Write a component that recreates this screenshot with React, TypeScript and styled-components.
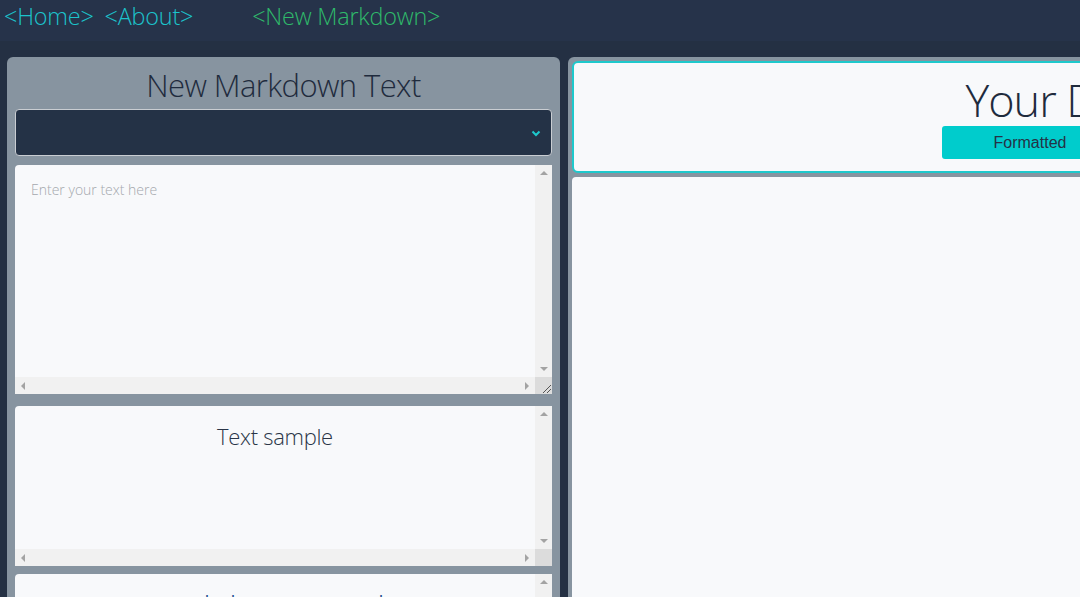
import React from "react";
import styled, { createGlobalStyle } from "styled-components";

const Global = createGlobalStyle`
  html, body {
    margin: 0;
    padding: 0;
    background: #243043;
    overflow: hidden;
    font-family: "Open Sans", "Noto Sans", sans-serif;
  }
  * { box-sizing: border-box; }
`;

const Page = styled.div`
  width: 1800px;
  min-height: 597px;
  background: #243043;
`;

const NavBar = styled.nav`
  height: 41px;
  background: #26334a;
  display: flex;
  align-items: flex-start;
  padding: 1px 0 0 4px;
  gap: 11px;
`;

const NavLink = styled.a<{ $green?: boolean; $offset?: number }>`
  font-family: "Open Sans", sans-serif;
  font-weight: 300;
  font-size: 23.4px;
  line-height: 30px;
  color: ${(p) => (p.$green ? "#2fba6a" : "#1cc3cc")};
  text-decoration: none;
  margin-left: ${(p) => p.$offset ?? 0}px;
  letter-spacing: -0.2px;
`;

const Main = styled.main`
  display: flex;
  gap: 8px;
  padding: 16px 0 0 7px;
`;

const LeftPanel = styled.section`
  width: 553px;
  flex-shrink: 0;
  background: #8794a0;
  border-radius: 6px 6px 0 0;
  padding: 8px 8px 0;
  display: flex;
  flex-direction: column;
  height: 560px;
  & > * {
    flex-shrink: 0;
  }
`;

const PanelTitle = styled.h1`
  margin: 0;
  font-family: "Open Sans", sans-serif;
  font-weight: 300;
  font-size: 31px;
  line-height: 40px;
  color: #1f2b3d;
  text-align: center;
  letter-spacing: -0.6px;
  height: 44px;
`;

const SelectWrap = styled.div`
  position: relative;
  height: 47px;
  margin-bottom: 9px;
`;

const Select = styled.select`
  appearance: none;
  display: block;
  width: 100%;
  height: 47px;
  background: #243246;
  border: 1px solid #c9cdd2;
  border-radius: 4px;
  color: #e8eef2;
  outline: none;
`;

const Chevron = styled.svg`
  position: absolute;
  right: 11px;
  top: 21px;
  width: 10px;
  height: 7px;
  pointer-events: none;
`;

/* Scroll frame: content + classic scrollbars laid out in a grid */
const Frame = styled.div<{ $h: number; $gap: number }>`
  height: ${(p) => p.$h}px;
  display: grid;
  grid-template-columns: 1fr 17px;
  grid-template-rows: 1fr 17px;
  background: #f8f9fb;
  border-radius: 4px 0 0 0;
  overflow: hidden;
  margin-bottom: ${(p) => p.$gap}px;
`;

const VBar = styled.div`
  background: #f1f1f1;
  display: flex;
  flex-direction: column;
  justify-content: space-between;
  align-items: center;
  padding: 6px 0;
`;

const HBar = styled.div`
  background: #f1f1f1;
  display: flex;
  justify-content: space-between;
  align-items: center;
  padding: 0 6px;
`;

const Corner = styled.div`
  background: #dcdcdc;
  display: flex;
  align-items: flex-end;
  justify-content: flex-end;
`;

const Arrow = styled.span<{ $dir: "up" | "down" | "left" | "right" }>`
  width: 0;
  height: 0;
  border-style: solid;
  ${(p) =>
    p.$dir === "up"
      ? "border-width: 0 4px 4px 4px; border-color: transparent transparent #a3a3a3 transparent;"
      : p.$dir === "down"
      ? "border-width: 4px 4px 0 4px; border-color: #a3a3a3 transparent transparent transparent;"
      : p.$dir === "left"
      ? "border-width: 4px 4px 4px 0; border-color: transparent #a3a3a3 transparent transparent;"
      : "border-width: 4px 0 4px 4px; border-color: transparent transparent transparent #a3a3a3;"}
`;

const TextArea = styled.textarea`
  display: block;
  width: 100%;
  height: 100%;
  resize: none;
  overflow: hidden;
  border: none;
  background: transparent;
  padding: 15px 16px;
  font-family: "Open Sans", sans-serif;
  font-weight: 300;
  font-size: 14px;
  color: #333;
  outline: none;
  &::placeholder {
    color: #a4a8ad;
  }
`;

const BoxContent = styled.div<{ $pad: number }>`
  padding-top: ${(p) => p.$pad}px;
  overflow: hidden;
`;

const SampleHeading = styled.h2<{ $size: number; $color: string }>`
  margin: 0;
  text-align: center;
  font-family: "Open Sans", sans-serif;
  font-weight: 300;
  font-size: ${(p) => p.$size}px;
  line-height: 1.3;
  color: ${(p) => p.$color};
  letter-spacing: -0.3px;
`;

const RightPanel = styled.section`
  width: 1100px;
  flex-shrink: 0;
  background: #8794a0;
  border-radius: 6px 6px 0 0;
  padding: 4px;
  display: flex;
  flex-direction: column;
  gap: 4px;
  height: 560px;
`;

const HeaderCard = styled.div`
  height: 112px;
  flex-shrink: 0;
  background: #f8f9fb;
  border: 2px solid #1ec9cc;
  border-radius: 6px;
  display: flex;
  flex-direction: column;
  align-items: center;
  padding-top: 10px;
`;

const DocTitle = styled.h1`
  margin: 0;
  font-family: "Open Sans", sans-serif;
  font-weight: 300;
  font-size: 45px;
  line-height: 53px;
  color: #1f2b3d;
  letter-spacing: -1px;
`;

const ButtonRow = styled.div`
  display: flex;
`;

const ToggleButton = styled.button<{ $active?: boolean }>`
  width: 176px;
  height: 33px;
  border: none;
  border-radius: ${(p) => (p.$active ? "3px 0 0 3px" : "0 3px 3px 0")};
  background: ${(p) => (p.$active ? "#00cccc" : "#243246")};
  color: ${(p) => (p.$active ? "#253245" : "#e8eef2")};
  font-family: "Liberation Sans", Arial, sans-serif;
  font-size: 16px;
  padding: 0;
  cursor: pointer;
`;

const Preview = styled.div`
  flex: 1;
  background: #f8f9fb;
  border-radius: 4px 4px 0 0;
`;

function Scrollbars({ grip }: { grip?: boolean }) {
  return (
    <>
      <VBar>
        <Arrow $dir="up" />
        <Arrow $dir="down" />
      </VBar>
      <HBar>
        <Arrow $dir="left" />
        <Arrow $dir="right" />
      </HBar>
      <Corner>
        {grip && (
          <svg width="17" height="17" viewBox="0 0 17 17">
            <path d="M16 8 L8 16 M16 12 L12 16" stroke="#555" strokeWidth="1" />
          </svg>
        )}
      </Corner>
    </>
  );
}

export default function App() {
  return (
    <>
      <Global />
      <Page>
        <NavBar>
          <NavLink href="#">&lt;Home&gt;</NavLink>
          <NavLink href="#">&lt;About&gt;</NavLink>
          <NavLink href="#" $green $offset={48}>
            &lt;New Markdown&gt;
          </NavLink>
        </NavBar>
        <Main>
          <LeftPanel>
            <PanelTitle>New Markdown Text</PanelTitle>
            <SelectWrap>
              <Select defaultValue="">
                <option value=""></option>
              </Select>
              <Chevron viewBox="0 0 10 7">
                <path d="M1.5 1.5 L5 5 L8.5 1.5" fill="none" stroke="#1ec9cc" strokeWidth="2" />
              </Chevron>
            </SelectWrap>
            <Frame $h={229} $gap={12}>
              <TextArea placeholder="Enter your text here" />
              <Scrollbars grip />
            </Frame>
            <Frame $h={160} $gap={8}>
              <BoxContent $pad={16}>
                <SampleHeading $size={22} $color="#2a3547">Text sample</SampleHeading>
              </BoxContent>
              <Scrollbars />
            </Frame>
            <Frame $h={160} $gap={8}>
              <BoxContent $pad={13}>
                <SampleHeading $size={31} $color="#1f4f8f">Markdown sample</SampleHeading>
              </BoxContent>
              <Scrollbars />
            </Frame>
          </LeftPanel>
          <RightPanel>
            <HeaderCard>
              <DocTitle>Your Document</DocTitle>
              <ButtonRow>
                <ToggleButton $active>Formatted</ToggleButton>
                <ToggleButton>Raw</ToggleButton>
              </ButtonRow>
            </HeaderCard>
            <Preview />
          </RightPanel>
        </Main>
      </Page>
    </>
  );
}
